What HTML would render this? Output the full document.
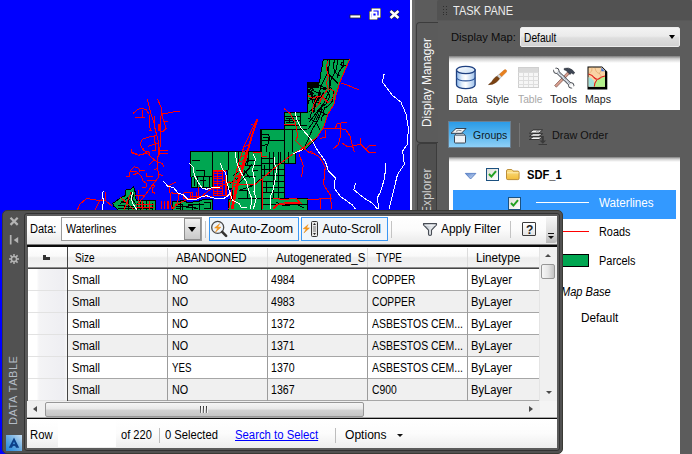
<!DOCTYPE html>
<html><head><meta charset="utf-8"><title>Map Data Table</title>
<style>
html,body{margin:0;padding:0}
body{width:692px;height:454px;overflow:hidden;position:relative;background:#0000ff;font:11px/14px "Liberation Sans",sans-serif}
div,span,svg{position:absolute;box-sizing:border-box}
.t{white-space:pre;transform-origin:0 50%}
#map{left:0;top:0;width:410px;height:454px}
#strip{left:410px;top:0;width:2px;height:454px;background:#fff}
#rp{left:412px;top:0;width:280px;height:454px;background:#5c5c5c;border-left:3px solid #686868}
.vtab{border:1px solid #3c3c3c;border-right:none;border-radius:4px 0 0 4px}
.vt{white-space:pre;transform:rotate(-90deg);transform-origin:0 0}
.combo{background:linear-gradient(#f3f3f3,#ebebeb 45%,#dedede 55%,#d2d2d2);border:1px solid #ececec;border-radius:2px}
.wbox{background:#fff}
.wbox:before{content:"";position:absolute;left:0;right:0;top:0;height:7px;background:linear-gradient(#7c7c7c,#cfcfcf 40%,#fff)}

.wbox.tr:before{height:5px}

</style></head>
<body>
<svg id="map" viewBox="0 0 410 454" shape-rendering="crispEdges"><path d="M172.6 212.0 L172.6 201.5 L183.0 200.8 L188.0 202.5 L198.0 201.6 L204.5 199.0 L212.5 199.0 L212.5 212.0z" fill="#00a651" stroke="#000" stroke-width="1"/>
<path d="M323.4 59.3 L349.7 59.3 L340.5 80.6 L335.8 95.6 L334.1 104.1 L327.6 114.8 L323.4 127.6 L317.0 137.3 L306.3 149.0 L297.0 152.0 L295.2 152.0 L295.2 163.9 L284.8 163.9 L284.8 198.6 L307.5 198.6 L307.5 212.0 L228.6 212.0 L228.6 199.5 L232.0 199.5 L232.0 188.0 L227.0 188.0 L227.0 170.0 L212.5 170.0 L212.5 187.3 L191.6 187.3 L191.6 184.5 L190.8 174.7 L190.8 151.8 L260.5 151.8 L260.5 129.4 L284.5 129.4 L284.5 112.3 L307.4 112.3 L307.4 82.1 L319.5 82.1 L321.0 72.0z" fill="#00a651" stroke="#000" stroke-width="1"/>
<path d="M112.8 203.4 L121.0 197.5 L125.8 195.5 L125.8 190.0 L131.0 189.0 L133.6 187.0 L135.5 193.0 L136.2 200.8 L155.3 200.8 L155.3 212.0 L120.0 212.0 L116.0 208.0 L113.5 206.0z" fill="#00a651" stroke="#000" stroke-width="1"/>
<path d="M307.4 82.1 h12 v6 h-12z" fill="#000"/>
<path d="M261.2 129.4 L261.2 210.0 M273.5 152.0 L273.5 198.6 M278.6 152.0 L278.6 198.6 M269.2 152.0 L269.2 175.0 M284.8 129.4 L284.8 164.0 M212.5 151.8 L212.5 187.7 M238.0 151.8 L238.0 165.0 M203.0 176.0 L203.0 187.7 M197.0 176.0 L197.0 187.7 M209.0 176.0 L209.0 187.7 M248.0 152.0 L248.0 162.0 M292.0 130.0 L292.0 152.0 M300.0 112.3 L300.0 129.4 M228.0 152.0 L228.0 170.0 M261.2 163.9 L295.2 163.9 M261.2 169.7 L284.8 169.7 M261.2 175.5 L284.8 175.5 M261.2 181.2 L284.8 181.2 M261.2 187.0 L284.8 187.0 M261.2 192.8 L284.8 192.8 M238.0 198.6 L307.5 198.6 M192.0 176.0 L212.5 176.0 M238.0 165.0 L261.0 165.0 M260.5 129.4 L307.0 129.4 M261.0 140.0 L284.8 140.0 M284.5 120.0 L300.0 120.0 M262.0 204.0 L307.0 204.0 M262.0 158.0 L273.0 158.0 M330.0 59.3 L328.0 72.0 L322.0 84.0 L318.0 96.0 L314.0 108.0 L309.0 112.0 M338.0 59.3 L336.0 70.0 L331.0 80.0 L329.0 92.0 L324.0 103.0 L318.0 112.0 L312.0 124.0 L308.0 129.0 M344.0 59.3 L343.0 66.0 L339.0 72.0 L337.0 78.0 M320.0 88.0 L326.0 90.0 L330.0 96.0 L326.0 104.0 L320.0 108.0 L314.0 116.0 L309.0 122.0 M309.0 90.0 L313.0 94.0 L312.0 102.0 L316.0 106.0 L313.0 112.0 M309.0 98.0 L315.0 100.0 L320.0 98.0 L324.0 92.0 M322.0 110.0 L318.0 120.0 L312.0 130.0 L308.0 140.0 L304.0 148.0 M308.0 118.0 L316.0 122.0 L320.0 130.0 M328.2 58.9 L326.5 65.6 L329.1 74.4 L334.4 79.7 L337.9 83.2 M334.4 58.9 L333.5 67.3 L335.3 72.6 L339.7 76.2 M342.3 62.0 L340.9 64.7 L343.2 66.5 L346.2 64.7 M329.1 74.4 L330.0 86.7 L333.5 92.0 L332.6 100.9 L328.2 106.1 L324.7 107.9 L322.9 113.2 M286.0 118.0 L293.0 118.0 L293.0 122.0 L286.0 122.0 M289.0 118.0 L289.0 122.0 M284.5 116.0 L300.0 116.0 M284.5 125.0 L307.0 125.0 M263.0 137.0 L268.0 137.0 L269.0 142.0 L266.0 148.0 L266.0 152.0 M236.0 180.0 L240.0 176.0 L246.0 172.0 L250.0 168.0 M240.0 190.0 L252.0 186.0 L262.0 178.0 M180.0 200.7 L180.0 210.0 M188.0 204.0 L204.0 204.0 M176.0 206.0 L196.0 208.0 M120.0 204.0 L130.0 196.0 L136.0 204.0 L150.0 204.0 M128.0 200.0 L128.0 210.0 M140.0 201.0 L140.0 210.0 M146.0 201.0 L146.0 210.0 M118.0 208.0 L152.0 208.0 M240.0 172.0 L248.0 160.0 L256.0 160.0 M243.0 176.0 L252.0 164.0 M238.0 184.0 L246.0 176.0 L256.0 176.0 M244.0 170.0 L250.0 178.0 M247.0 158.0 L247.0 166.0 M252.0 170.0 L258.0 170.0 M239.0 190.0 L247.0 190.0 L247.0 198.0 M250.0 186.0 L258.0 182.0 M233.0 176.0 L238.0 172.0 M230.0 184.0 L236.0 178.0 M228.0 190.0 L233.0 188.0 M262.0 134.0 L268.0 134.0 L270.0 138.0 L268.0 144.0 L262.0 146.0 M262.0 158.0 L270.0 158.0 M264.0 165.0 L264.0 175.0 M266.0 181.0 L266.0 192.0 M280.0 152.0 L280.0 164.0 M288.0 152.0 L288.0 164.0 M118.0 205.0 L124.0 205.0 L124.0 210.0 M121.0 201.0 L126.0 203.0 L130.0 199.0 M131.0 192.0 L134.0 196.0 L131.0 200.0 M137.0 203.0 L137.0 210.0 M143.0 203.0 L143.0 207.0 M152.0 203.0 L152.0 210.0 M126.0 206.0 L134.0 207.0 M175.0 204.0 L182.0 204.0 L182.0 210.0 M185.0 207.0 L192.0 205.0 L192.0 210.0 M199.0 203.0 L199.0 210.0 M204.0 202.0 L210.0 202.0 L210.0 208.0 L204.0 208.0 M194.0 208.0 L198.0 208.0 M176.0 208.0 L180.0 208.0 M194.0 178.0 L194.0 186.0 M200.0 180.0 L206.0 180.0 M196.0 170.0 L204.0 170.0 L204.0 176.0 M192.0 160.0 L200.0 160.0 M276.0 202.0 L284.0 206.0 L296.0 204.0 L304.0 208.0" fill="none" stroke="#000" stroke-width="1"/>
<clipPath id="mc"><path d="M323.4 59.3 L349.7 59.3 L340.5 80.6 L335.8 95.6 L334.1 104.1 L327.6 114.8 L323.4 127.6 L317.0 137.3 L306.3 149.0 L297.0 152.0 L295.2 152.0 L295.2 163.9 L284.8 163.9 L284.8 198.6 L307.5 198.6 L307.5 212.0 L228.6 212.0 L228.6 199.5 L232.0 199.5 L232.0 188.0 L227.0 188.0 L227.0 170.0 L212.5 170.0 L212.5 187.3 L191.6 187.3 L191.6 184.5 L190.8 174.7 L190.8 151.8 L260.5 151.8 L260.5 129.4 L284.5 129.4 L284.5 112.3 L307.4 112.3 L307.4 82.1 L319.5 82.1 L321.0 72.0z"/></clipPath>
<path clip-path="url(#mc)" d="M313.2 88.5 L311.9 90.9 L310.3 94.2 M308.1 99.2 L306.1 99.4 L306.7 102.1 M315.1 108.8 L314.6 111.8 L313.4 112.1 M318.0 95.9 L317.3 98.8 L314.4 103.0 M309.7 87.5 L310.8 88.6 L313.8 89.1 M319.1 95.2 L316.5 96.9 L316.6 100.3 M319.9 96.8 L318.8 98.3 L317.9 100.9 M322.1 105.0 L321.2 108.0 L320.2 108.8 M320.9 92.6 L318.8 97.0 L317.3 99.7 M309.9 98.7 L312.1 99.4 L312.8 99.8 M323.6 93.4 L322.4 96.2 L320.7 99.2 M323.0 112.3 L324.1 113.9 L327.8 114.2 M319.3 113.8 L317.4 117.5 L316.1 120.2 M307.4 97.9 L305.2 100.4 L305.7 101.3 M309.5 91.4 L310.4 92.1 L313.9 93.2 M317.4 110.5 L320.0 111.5 L323.8 113.0 M313.8 110.5 L311.1 113.2 L310.3 117.5 M311.4 98.5 L308.6 101.0 L308.8 103.9 M314.0 101.0 L317.6 102.7 L321.0 103.7 M319.8 85.6 L324.3 87.8 L326.6 88.2 M314.5 96.0 L314.7 95.3 L317.6 97.2 M311.0 88.9 L308.4 89.9 L308.9 93.1 M308.9 94.9 L310.7 94.4 L311.7 96.0 M311.8 94.4 L311.8 98.1 L309.6 98.8 M315.9 98.5 L314.6 99.4 L314.3 101.6 M322.7 88.8 L324.2 88.3 L325.6 89.9 M317.3 84.8 L320.9 86.4 L322.4 86.8 M312.0 95.0 L313.8 96.5 L315.4 96.3 M313.3 90.7 L317.5 92.8 L319.6 93.2 M322.5 106.2 L321.2 106.6 L320.7 109.9 M307.5 92.4 L310.8 93.0 L311.4 93.9 M324.8 113.6 L322.2 116.3 L321.3 120.6 M310.7 90.1 L314.5 91.1 L316.2 92.3 M319.4 108.0 L322.2 109.4 L322.5 109.2" fill="none" stroke="#000" stroke-width="1"/>
<path d="M147.5 99.4 L148.9 105.9 L151.0 113.8 L154.0 123.2 L155.4 130.5 L157.6 137.7 L158.7 144.9 L159.0 155.0 L157.9 156.7 L157.3 162.5 L157.9 169.7 L158.7 176.9 L153.2 184.1 L148.9 189.9 L143.1 197.9 L138.8 202.9 M157.6 99.4 L161.9 108.8 L161.9 113.8 L160.5 117.5 L160.5 131.9 L160.2 144.9 L159.3 155.0 M161.9 113.8 L167.7 113.1 L173.5 112.0 L179.5 111.4 M133.3 113.4 L137.3 109.5 L141.7 108.4 L146.0 109.5 L148.9 113.8 M142.4 110.2 L142.4 117.2 M135.2 117.2 L144.6 117.2 M149.6 115.3 L149.6 124.0 L150.3 130.5 M149.0 130.5 L151.5 130.5 M154.0 116.0 L154.0 124.0 M161.9 113.8 L163.4 120.3 L166.2 128.3 L163.4 131.2 L160.2 131.9 M163.4 121.4 L167.7 121.4 M158.3 124.0 L159.0 131.0 M159.0 124.0 L159.6 131.0 M156.1 135.5 L148.9 137.0 L142.4 139.1 L140.2 143.5 L141.7 147.8 L143.8 150.7 L148.9 152.1 L149.6 155.0 M148.2 146.4 L154.7 144.2 L159.0 142.7 M154.7 136.2 L155.4 150.0 L151.8 150.0 M159.7 150.3 L167.7 150.3 M159.7 153.2 L167.7 153.2 M131.3 149.2 L131.6 152.1 L137.3 154.3 M143.1 154.3 L147.5 151.4 M130.8 149.4 L132.3 153.0 L138.8 155.2 L146.7 153.0 L143.1 148.7 M146.7 153.0 L154.0 159.6 L149.6 164.6 M154.0 159.6 L157.6 162.5 L162.6 163.2 L163.4 167.5 M125.8 176.2 L129.4 176.2 L130.1 171.1 L134.5 166.8 L138.8 168.2 L139.5 171.1 L145.3 170.4 M130.1 171.1 L135.9 171.1 L138.0 173.3 L133.0 174.7 M138.0 173.3 L141.7 176.9 L143.1 181.2 L146.7 183.4 L146.0 187.0 L141.7 187.0 M146.7 172.6 L146.7 176.9 L152.5 176.9 M146.7 180.5 L156.1 180.5 M154.0 169.7 L158.3 168.2 M157.9 174.0 L162.6 175.5 M151.3 186.3 L153.0 184.6 L154.7 186.3 L153.0 188.0 L151.3 186.3 M153.0 188.5 L152.5 192.8 L155.4 193.1 M138.0 190.0 L138.0 194.0 M135.2 195.0 L143.8 195.0 M138.0 196.0 L138.0 201.0 M161.2 200.7 L161.2 209.0 M164.1 200.7 L164.1 209.0 M167.0 200.7 L167.0 209.0 M168.4 200.7 L168.4 209.0 M167.7 186.3 L175.6 182.0 M169.9 187.0 L169.9 191.4 L171.3 209.0 M171.3 192.8 L179.2 194.2 L177.8 201.5 L173.5 209.0 M183.6 192.8 L192.3 192.8 L192.3 198.6 L183.6 198.6 L183.6 192.8 M198.8 187.0 L198.8 197.1 M171.3 209.0 L178.0 204.0 L186.0 200.0 L192.3 198.6 L200.9 197.1 L209.6 189.9 L220.0 186.0 L229.5 182.0 L241.0 184.8 L255.5 184.1 L262.7 178.3 L275.7 166.8 L293.0 153.8 L303.2 148.0 L317.0 137.3 L323.4 127.6 L327.6 114.8 L334.1 104.1 L335.8 95.6 L340.5 80.6 L349.7 59.3 M77.3 210.0 L80.0 204.0 L86.7 198.4 L96.0 200.0 L100.0 200.0 L105.0 201.0 M95.0 210.0 L99.0 202.0 L103.0 198.0 M105.0 192.0 L106.0 201.0 L112.0 206.0 M120.0 197.0 L128.0 204.0 L134.0 210.0 M124.0 210.0 L128.0 200.0 L131.0 192.0 M136.0 204.0 L154.0 204.0 M142.0 201.0 L142.0 210.0 M149.0 201.0 L149.0 210.0 M136.0 207.0 L154.0 207.0 M256.7 119.3 L251.3 136.4 L247.0 151.3 L241.7 170.6 L236.4 187.6 L232.1 209.0 M257.7 119.3 L252.3 136.4 L248.0 151.3 L242.7 170.6 L237.4 187.6 L233.1 209.0 M246.1 151.3 L240.8 170.6 L235.5 187.6 L231.2 209.0 M255.6 121.4 L243.8 147.0 L238.5 164.1 L233.2 183.4 L228.9 209.0 M244.3 147.0 L248.5 145.0 M242.6 152.0 L247.1 150.0 M241.0 157.0 L245.7 155.0 M239.5 162.0 L244.3 160.0 M238.0 167.0 L243.0 165.0 M236.6 172.0 L241.6 170.0 M235.2 177.0 L240.0 175.0 M233.9 182.0 L238.5 180.0 M232.8 187.0 L236.9 185.0 M253.0 125.0 L251.0 124.0 M262.0 179.0 L262.0 209.0 M303.2 148.0 L308.9 152.3 L315.0 154.5 M298.8 153.8 L303.2 165.3 L301.7 176.9 M272.8 198.6 L284.4 199.3 L295.9 198.6 L300.3 202.9 L293.0 202.2 L284.4 202.9 L277.1 204.4 L272.8 209.0 M274.0 209.0 L278.0 205.0 L285.0 204.0 L294.0 203.5 L300.0 204.0 M307.5 199.3 L331.9 198.7 M320.1 198.7 L320.1 209.0 M253.3 152.3 L261.2 152.3 L261.2 156.0 L267.0 156.7 M213.5 171.0 L222.0 171.0 M213.5 173.5 L222.0 173.5 M213.5 176.0 L222.0 176.0 M213.5 178.5 L222.0 178.5 M213.5 181.0 L222.0 181.0 M213.5 183.5 L222.0 183.5 M213.5 186.0 L222.0 186.0 M213.5 188.5 L222.0 188.5 M213.5 191.0 L222.0 191.0 M213.5 193.5 L222.0 193.5 M213.5 170.0 L213.5 195.0 M217.5 170.0 L217.5 195.0 M222.0 170.0 L222.0 195.0 M225.5 170.0 L225.5 195.0 M213.5 170.0 L226.0 170.0 M222.0 180.0 L226.0 180.0 L226.0 195.0 L213.0 195.0 M190.8 196.0 L212.0 196.0 M196.0 192.0 L196.0 200.0 M190.8 193.0 L190.8 200.0 M327.3 61.2 L326.5 69.1 L328.2 76.2 L326.5 83.2 L328.2 88.5 L334.4 91.2 L333.5 97.3 L328.2 102.6 L324.7 99.1 L322.9 97.3 L317.6 96.4 L313.2 106.1 L312.3 112.3 M307.9 95.6 L312.3 98.2 L317.6 96.4 M328.2 88.5 L322.9 95.6 L318.5 104.4 L315.0 107.9 M340.5 82.8 L346.9 84.9 L354.4 88.1 L358.8 89.6 M323.4 128.7 L335.1 128.7 L337.3 123.4 L346.9 122.3 M335.1 128.7 L340.5 128.7 L345.8 129.8 L350.1 136.2 L352.2 144.7 L354.4 152.0 M340.5 123.4 L340.5 136.2 L338.3 144.7 L333.0 149.0 M325.5 129.8 L325.5 137.3 L320.2 138.3 M341.5 142.6 L347.9 146.9 L360.5 144.2 L360.5 138.0 M360.5 144.2 L368.9 152.6 L376.3 152.6 M368.9 145.9 L376.3 145.9 M368.9 145.9 L366.0 149.0 M283.8 108.4 L290.3 113.8 L295.6 123.4 L297.7 136.2 L295.6 140.5 L304.1 149.0 M283.8 124.4 L295.6 124.4 M310.0 150.9 L320.1 157.6 L325.2 167.7 L323.5 184.6 L330.2 194.7 L331.9 209.0" fill="none" stroke="#ff0000" stroke-width="1"/>
<path d="M384.1 74.1 L382.4 81.9 L392.5 95.4 L400.9 102.1 L406.0 113.9 L408.3 127.3 L407.6 144.2 L402.6 150.9 L404.3 164.4 L397.5 174.5 L394.2 187.9 L390.8 201.4 L389.1 209.0 M385.8 162.7 L384.7 177.8 L380.7 191.3 L377.3 198.0 L379.0 209.0 M355.5 182.9 L353.8 189.6 L363.9 198.0 L372.3 203.1 L377.3 209.0 M295.2 112.3 L296.7 119.1 L300.9 127.6 L308.4 136.2 L313.0 142.0 L316.7 149.2 L325.2 161.0 L328.5 171.1 L335.3 177.8 L334.2 187.9 L340.3 196.4 L352.1 204.8 L355.5 209.0 M303.2 149.4 L293.0 153.8 M220.1 163.2 L222.9 169.7 L225.8 173.3 L226.6 181.2 L229.5 191.4 L232.3 200.0 L239.6 203.6 L241.0 207.2 L247.5 207.5 M235.2 152.3 L236.7 162.5 L239.6 169.7 L242.5 175.5 L246.1 181.2 L249.0 191.4 L251.9 198.6 L250.4 209.0 M253.3 153.8 L255.5 159.6 L252.6 169.7 L254.7 181.2 L254.0 191.4 L256.2 198.6 L253.3 209.0 M274.2 156.7 L274.2 162.5 L276.4 168.2 L275.7 176.9 L274.2 184.1 L272.8 191.4 L270.6 195.7 L270.6 209.0 M163.4 181.2 L167.7 186.3 L173.5 187.7 L177.8 192.8 L183.6 195.0 L187.9 199.3 L195.1 200.0 L200.9 197.1 L206.7 195.7 L212.5 197.9 L223.7 198.6 L228.0 195.7 L230.9 192.8 M189.4 163.2 L193.0 166.8 L194.4 175.5 L198.0 182.0 L202.4 188.5 L206.7 189.2 L212.5 187.7 L220.0 187.3 M103.4 191.0 L102.0 196.0 L104.0 201.0 L102.5 205.0 L103.0 210.0 M133.0 192.0 L131.0 198.0 L133.0 204.0 L137.0 210.0" fill="none" stroke="#fff" stroke-width="1"/>
<g shape-rendering="auto"><rect x="350" y="15" width="10.500" height="3" fill="#fff" stroke="#223" stroke-width=".8"/><path d="M372.500 9.500 h7 v7 h-7z M370.500 12.500 h6 v6 h-6z" fill="#0000ff" stroke="#223" stroke-width="3"/><path d="M372.500 9.500 h7 v7 h-7z M370.500 12.500 h6 v6 h-6z" fill="#0000ff" stroke="#fff" stroke-width="1.800"/><path d="M390.500 11 l8 7 M398.500 11 l-8 7" stroke="#223" stroke-width="3.800"/><path d="M390.500 11 l8 7 M398.500 11 l-8 7" stroke="#fff" stroke-width="2.600"/></g></svg>
<div id="strip"></div>
<div id="rp"></div>
<div style="left:437px;top:0;width:255px;height:20px;background:#525252;border-radius:2px 3px 0 0"></div><div style="left:437px;top:20px;width:255px;height:1px;background:#585858"></div>
<div style="left:443px;top:6px;width:1px;height:1px;background:#2e2e2e"></div><div style="left:443px;top:9px;width:1px;height:1px;background:#2e2e2e"></div><div style="left:443px;top:12px;width:1px;height:1px;background:#2e2e2e"></div><div style="left:443px;top:14px;width:1px;height:1px;background:#2e2e2e"></div><div style="left:446px;top:6px;width:1px;height:1px;background:#2e2e2e"></div><div style="left:446px;top:9px;width:1px;height:1px;background:#2e2e2e"></div><div style="left:446px;top:12px;width:1px;height:1px;background:#2e2e2e"></div><div style="left:446px;top:14px;width:1px;height:1px;background:#2e2e2e"></div>
<span class="t" style="left:452.5px;top:3.7px;font:normal normal 12px/14px 'Liberation Sans',sans-serif;color:#ececec;transform:scaleX(0.916);">TASK PANE</span>
<div class="vtab" style="left:416px;top:22px;width:22px;height:121px;background:#5b5b5b"></div>
<div class="vtab" style="left:417px;top:143px;width:20px;height:120px;background:#505050"></div>
<div style="left:436px;top:143px;width:1px;height:120px;background:#3c3c3c"></div>
<span class="vt" style="left:419.500px;top:127px;font:12px/14px 'Liberation Sans',sans-serif;color:#f6f6f6;letter-spacing:-0.08px">Display Manager</span>
<span class="vt" style="left:419.500px;top:213.500px;font:12px/14px 'Liberation Sans',sans-serif;color:#cfcfcf;letter-spacing:0.1px">Explorer</span>
<span class="t" style="left:450.6px;top:29.8px;font:normal normal 11px/14px 'Liberation Sans',sans-serif;color:#0c0c0c;transform:scaleX(1.022);">Display Map:</span>
<div class="combo" style="left:520px;top:27px;width:160px;height:19.500px"></div>
<span class="t" style="left:523.6px;top:30.6px;font:normal normal 12px/14px 'Liberation Sans',sans-serif;color:#000;transform:scaleX(0.852);">Default</span>
<div style="left:669px;top:35px;width:0;height:0;border:3.500px solid transparent;border-top:4px solid #000;border-bottom:none"></div>
<div class="wbox" style="left:449px;top:56px;width:231px;height:54px"></div>
<span class="t" style="left:455.6px;top:91.7px;font:normal normal 11px/14px 'Liberation Sans',sans-serif;color:#1c1c1c;transform:scaleX(0.920);">Data</span>
<span class="t" style="left:486.0px;top:91.7px;font:normal normal 11px/14px 'Liberation Sans',sans-serif;color:#1c1c1c;transform:scaleX(0.940);">Style</span>
<span class="t" style="left:517.5px;top:91.7px;font:normal normal 11px/14px 'Liberation Sans',sans-serif;color:#a8a8a8;transform:scaleX(0.932);">Table</span>
<span class="t" style="left:550.0px;top:91.7px;font:normal normal 11px/14px 'Liberation Sans',sans-serif;color:#1c1c1c;transform:scaleX(1.051);">Tools</span>
<span class="t" style="left:585.0px;top:91.7px;font:normal normal 11px/14px 'Liberation Sans',sans-serif;color:#1c1c1c;transform:scaleX(0.966);">Maps</span>
<svg style="left:0;top:0;width:692px;height:454px" viewBox="0 0 692 454" >
<defs>
<linearGradient id="cyl" x1="0" x2="1" y1="0" y2="0"><stop offset="0" stop-color="#8ab6ea"/><stop offset=".3" stop-color="#e4effb"/><stop offset=".5" stop-color="#ffffff"/><stop offset="1" stop-color="#9cc0ea"/></linearGradient>
<linearGradient id="cylt" x1="0" x2="1" y1="0" y2="1"><stop offset="0" stop-color="#ffffff"/><stop offset="1" stop-color="#c4dbf3"/></linearGradient>
</defs>
<!-- Data cylinder -->
<path d="M456.5 70 v15 a9.3 3.6 0 0 0 18.6 0 v-15 z" fill="url(#cyl)" stroke="#1d3f80" stroke-width="1.3"/>
<path d="M456.5 77.5 a9.3 3.4 0 0 0 18.6 0" fill="none" stroke="#2a5298" stroke-width="1.1"/>
<ellipse cx="465.8" cy="70" rx="9.3" ry="3.6" fill="url(#cylt)" stroke="#1d3f80" stroke-width="1.3"/>
<!-- Style brush -->
<path d="M488.5 84.6 q4 .4 7.5 -2.2 q3 -2.2 3.8 -4.2 l-2.4 -2.2 q-2.6 1 -4.2 3.6 q-1.6 3.4 -4.7 5z" fill="#7c4312" stroke="#5e300a" stroke-width=".5"/>
<path d="M497.2 76 l2.6 2.5 l2 -1.9 l-2.5 -2.5z" fill="#d8d8d8" stroke="#8a8a8a" stroke-width=".4"/>
<path d="M499.4 74.2 l2.4 2.4 l4.6 -4.6 q.7 -1.2 -.2 -2 q-1 -.8 -2.1 0z" fill="#e8801e" stroke="#b85c0c" stroke-width=".4"/>
<!-- Table (disabled) -->
<rect x="518.5" y="67.5" width="20" height="20" fill="#f6f6f6" stroke="#cfcfcf"/>
<rect x="519" y="68" width="19" height="4" fill="#dadada"/>
<path d="M518.5 72.5h20 M518.5 76.5h20 M518.5 80.5h20 M518.5 84.5h20 M523.5 72v15 M528.5 72v15 M533.5 72v15" stroke="#dedede" stroke-width="1" fill="none"/>
<!-- Tools: hammer -->
<path d="M554.6 85.6 l1.8 1.6 l13.6 -14 l-1.9 -1.7z" fill="#d9a090" stroke="#6a4038" stroke-width=".6"/>
<path d="M564.2 68.4 q4.6 -1.4 8 1.4 l2.6 3 l-1.6 1.5 l-1.6 -1.4 l-1.6 1.7 l-3 -3.2 q-.9 -1.6 -2.8 -1.5z" fill="#3e4654" stroke="#20242c" stroke-width=".5"/>
<!-- Tools: wrench -->
<path d="M557.2 71.7 L570.3 84.500" stroke="#30343c" stroke-width="3.600" fill="none"/>
<circle cx="556.300" cy="70.800" r="2.700" fill="#f6f6f6" stroke="#30343c" stroke-width=".9"/>
<circle cx="571.200" cy="85.400" r="2.700" fill="#f6f6f6" stroke="#30343c" stroke-width=".9"/>
<path d="M557.2 71.7 L570.3 84.500" stroke="#f2f4f6" stroke-width="2" fill="none"/>
<path d="M557.600 72.100 L569.900 84.100" stroke="#9aa6b8" stroke-width="1.600" stroke-dasharray=".8 1" fill="none"/>
<path d="M553.200 67.700 l3 3 M574.300 88.500 l-3 -3" stroke="#fff" stroke-width="2.200"/>
<!-- Maps page -->
<path d="M587.5 66.5 h14.500 l5.300 5.300 v17.700 h-19.800z" fill="#000"/>
<path d="M588.500 67.500 h12.800 l3.700 3.700 v15.500 h-16.500z" fill="#f9d3a4"/>
<path d="M588.500 77 q3 1 5 3.500 q1 2.500 .5 6.200 h-5.500z" fill="#9fe0dc"/>
<path d="M594 86.700 q.5 -4.500 2.500 -6.700 q3 -2.500 8.500 -3.500 v10.200z" fill="#b4f08c"/>
<path d="M588.500 74 q4 1 5.500 3.500 q2.500 2.500 4.500 1.500 q3 -2.500 6.500 -3 M596.800 80 q-2.300 2.500 -2.500 6.500" fill="none" stroke="#e01818" stroke-width="1.100"/>
<path d="M592 67.500 q1 4 -3 6 M595 68 q1 5 4.500 5.500 q2 2 1.500 5 M601 70 q-.5 3 -2 3.500" fill="none" stroke="#d8a060" stroke-width=".6"/>
<path d="M601.300 67.500 v3.700 h3.700z" fill="#3c6cd0"/>
<path d="M601.300 67.500 l3.700 3.700" stroke="#fff" stroke-width=".7"/>
</svg>
<div style="left:448px;top:121px;width:63px;height:27px;background:linear-gradient(#2c9be6,#55b4ee 50%,#8fd0f6);border:1px solid #6b7f90"></div>
<span class="t" style="left:473.0px;top:128.3px;font:normal normal 11px/14px 'Liberation Sans',sans-serif;color:#0e1a26;transform:scaleX(0.951);">Groups</span>
<div style="left:519px;top:123px;width:1px;height:24px;background:#747474"></div>
<span class="t" style="left:552.0px;top:128.3px;font:normal normal 11px/14px 'Liberation Sans',sans-serif;color:#111;transform:scaleX(0.985);">Draw Order</span>
<div class="wbox tr" style="left:449px;top:157px;width:231px;height:297px"></div>
<div style="left:453px;top:190px;width:223px;height:29px;background:#3399ff"></div>
<span class="t" style="left:527.2px;top:168.2px;font:normal bold 12px/14px 'Liberation Sans',sans-serif;color:#000;transform:scaleX(0.931);">SDF_1</span>
<span class="t" style="left:598.5px;top:196.2px;font:normal normal 12px/14px 'Liberation Sans',sans-serif;color:#fff;transform:scaleX(0.972);">Waterlines</span>
<span class="t" style="left:598.5px;top:224.7px;font:normal normal 12px/14px 'Liberation Sans',sans-serif;color:#000;transform:scaleX(0.905);">Roads</span>
<span class="t" style="left:598.5px;top:253.9px;font:normal normal 12px/14px 'Liberation Sans',sans-serif;color:#000;transform:scaleX(0.912);">Parcels</span>
<span class="t" style="left:561.0px;top:284.9px;font:italic normal 12px/14px 'Liberation Sans',sans-serif;color:#000;transform:scaleX(0.920);">Map Base</span>
<span class="t" style="left:581.3px;top:310.6px;font:normal normal 12px/14px 'Liberation Sans',sans-serif;color:#000;transform:scaleX(0.981);">Default</span>
<div style="left:536px;top:202px;width:53px;height:1px;background:#fff"></div>
<div style="left:536px;top:231px;width:53px;height:1px;background:#ff0000"></div>
<div style="left:536px;top:254px;width:53px;height:13px;background:#00a651;border:1px solid #000"></div>
<svg style="left:0;top:0;width:692px;height:454px" viewBox="0 0 692 454" >
<defs>
<linearGradient id="tri" x1="0" x2="1" y1="0" y2="1"><stop offset="0" stop-color="#5d86cc"/><stop offset="1" stop-color="#d5e2f6"/></linearGradient>
<linearGradient id="fold" x1="0" x2="0" y1="0" y2="1"><stop offset="0" stop-color="#fbe08a"/><stop offset="1" stop-color="#f2bd38"/></linearGradient>
<linearGradient id="cb" x1="0" x2="1" y1="0" y2="1"><stop offset="0" stop-color="#dcdcd6"/><stop offset="1" stop-color="#ffffff"/></linearGradient>
</defs>
<!-- Groups icon -->
<path d="M451 133.300 l5 -4.800 h10 l-4.600 4.800z" fill="#f4f6f8" stroke="#2a3340" stroke-width=".9"/>
<path d="M456 131.300 q2.500 -1.600 5.500 -.600" fill="none" stroke="#555" stroke-width=".7"/>
<rect x="454.500" y="135.500" width="11" height="7.500" rx=".8" fill="#eef2f6" stroke="#2a3340" stroke-width=".9"/>
<path d="M454.500 135.500 l1.500 -1.700 h7.500 l2 1.700" fill="#cfd6de" stroke="#2a3340" stroke-width=".8"/>
<!-- Draw order icon -->
<g stroke="#1c1c1c" stroke-width=".8" fill="#f2f2f2">
<path d="M529.500 139.500 l3.500 -2.600 h9.500 l-3.500 2.600z"/>
<path d="M529.500 136.300 l3.500 -2.600 h9.500 l-3.500 2.600z"/>
<path d="M529.500 133 l3.500 -3 h9.500 l-3.500 3z"/>
</g>
<path d="M536.200 131.500 q1.500 -1 3 -.3" fill="none" stroke="#444" stroke-width=".6"/>
<path d="M541.800 136 v4.500 h-2.300 l3.300 3.200 l3.300 -3.200 h-2.300 v-4.500z" fill="#3a3a3a"/>
<path d="M538.500 144.500 h8.500" stroke="#3a3a3a" stroke-width="1"/>
<!-- expand triangle -->
<path d="M465.300 173.400 h10.600 l-5.300 5.600z" fill="url(#tri)" stroke="#4a74be" stroke-width=".8"/>
<!-- checkbox 1 -->
<rect x="486.500" y="168.500" width="12" height="12" fill="url(#cb)" stroke="#1c5180"/>
<path d="M489 174 l2.400 2.600 l4.600 -5.400" fill="none" stroke="#21a121" stroke-width="2"/>
<!-- folder -->
<path d="M506.500 171 q0 -1.500 1.500 -1.500 h3.200 q1 0 1.500 1 l.3 .6 h4.800 q1.300 0 1.300 1.300 v6 q0 1.200 -1.300 1.200 h-10 q-1.300 0 -1.300 -1.200z" fill="url(#fold)" stroke="#b5852a" stroke-width=".9"/>
<path d="M507 172.800 h11.600" stroke="#fff3c4" stroke-width=".8"/>
<!-- checkbox 2 -->
<rect x="508.500" y="197.500" width="12" height="12" fill="url(#cb)" stroke="#1c5180"/>
<path d="M511 203 l2.400 2.600 l4.600 -5.400" fill="none" stroke="#21a121" stroke-width="2"/>
</svg>
<div style="left:2px;top:210px;width:561px;height:244px;background:#515151;border:1px solid #3a3a34;border-radius:5px"></div>
<div style="left:24px;top:213px;width:536px;height:238px;background:#5b5b5b;border:1px solid #323232;border-radius:3px"></div>
<div style="left:27px;top:216px;width:530px;height:232px;background:#fff"></div>
<svg style="left:0;top:0;width:692px;height:454px" viewBox="0 0 692 454" >
<g stroke="#b4b4b4" fill="none">
<path d="M10.500 217.700 l7.200 7.200 M17.700 217.700 l-7.200 7.200" stroke-width="2.200"/>
<path d="M10.700 235 v9.500" stroke-width="1.700"/>
</g>
<path d="M18.200 237 v6.200 l-4.500 -3.100z" fill="#b4b4b4"/>
<g stroke="#b4b4b4" stroke-width="1.500" fill="none">
<circle cx="14" cy="259" r="2.600"/>
<path d="M14 254 v2 M14 262 v2 M9 259 h2 M17 259 h2 M10.400 255.400 l1.500 1.500 M16.100 261.100 l1.500 1.500 M17.600 255.400 l-1.500 1.500 M11.900 261.100 l-1.500 1.500"/>
</g>
<defs><linearGradient id="alogo" x1="0" x2="1" y1="1" y2="0"><stop offset="0" stop-color="#1f86de"/><stop offset=".45" stop-color="#5fa6e0"/><stop offset="1" stop-color="#c6ddf2"/></linearGradient></defs>
<rect x="6" y="435" width="16" height="16" fill="url(#alogo)"/>
<path d="M14 437.500 l5.200 10.300 h-3.200 l-.7 -1.600 q-1.300 -1 -2.600 0 l-.7 1.600 h-3.200z" fill="#0c3f88"/>
<path d="M14 441.500 l1.300 2.800 q-1.300 -.5 -2.600 0z" fill="#3f8fd8"/>
</svg>
<span class="vt" style="left:5.500px;top:425px;font:11px/14px 'Liberation Sans',sans-serif;color:#b4bcc6;letter-spacing:0.55px">DATA TABLE</span>
<div style="left:27px;top:216px;width:530px;height:28px;background:linear-gradient(#fff,#fbfbfb 50%,#e9e9e9)"></div>
<div style="left:27px;top:244px;width:530px;height:1px;background:#7c7c7c"></div><div style="left:27px;top:245px;width:530px;height:2px;background:#0a0a0a"></div>
<span class="t" style="left:30.2px;top:221.5px;font:normal normal 12px/14px 'Liberation Sans',sans-serif;color:#000;transform:scaleX(0.920);">Data:</span>
<div style="left:61px;top:217px;width:141px;height:24px;background:#fff;border:1px solid #9a9a9a"></div>
<span class="t" style="left:65.7px;top:221.5px;font:normal normal 12px/14px 'Liberation Sans',sans-serif;color:#000;transform:scaleX(0.894);">Waterlines</span>
<div style="left:184px;top:218px;width:17px;height:22px;background:linear-gradient(#f2f2f2,#dcdcdc 50%,#cacaca);border:1px solid #8e8e8e"></div>
<div style="left:188px;top:227px;width:0;height:0;border:4px solid transparent;border-top:5px solid #000;border-bottom:none"></div>
<div style="left:205px;top:221px;width:1px;height:17px;background:#c4c4c4"></div>
<div style="left:209px;top:217px;width:90px;height:24px;background:#f1f6fb;border:1px solid #3b97f3"></div>
<span class="t" style="left:229.8px;top:221.5px;font:normal normal 12px/14px 'Liberation Sans',sans-serif;color:#000;transform:scaleX(1.065);">Auto-Zoom</span>
<div style="left:301px;top:217px;width:87px;height:24px;background:#f1f6fb;border:1px solid #3b97f3"></div>
<span class="t" style="left:322.3px;top:221.5px;font:normal normal 12px/14px 'Liberation Sans',sans-serif;color:#000;">Auto-Scroll</span>
<div style="left:391px;top:221px;width:1px;height:17px;background:#c4c4c4"></div>
<span class="t" style="left:441.3px;top:221.5px;font:normal normal 12px/14px 'Liberation Sans',sans-serif;color:#000;transform:scaleX(0.993);">Apply Filter</span>
<div style="left:510px;top:221px;width:1px;height:17px;background:#c4c4c4"></div>
<svg style="left:0;top:0;width:692px;height:454px" viewBox="0 0 692 454" >
<!-- auto zoom magnifier -->
<circle cx="217.700" cy="227.400" r="6" fill="#eef4fa" stroke="#4a4a4a" stroke-width="1.300"/>
<path d="M222.200 231.900 l3.900 3.900" stroke="#333" stroke-width="2.600" stroke-linecap="round"/>
<path d="M219.800 223.600 l-5.300 4.300 l3.200 .3 l-2.400 4.100 l5.700 -5.100 l-3.200 -.3z" fill="#f79a1c" stroke="#e07c08" stroke-width=".4"/>
<!-- auto scroll -->
<path d="M308.200 224.600 l-5 4.100 l3 .3 l-2.300 4 l5.600 -5 l-3 -.3z" fill="#f79a1c" stroke="#e07c08" stroke-width=".4"/>
<rect x="311.500" y="221.500" width="6" height="15" rx="1" fill="#e8e8e8" stroke="#333" stroke-width="1"/>
<rect x="313" y="226" width="3" height="6" fill="#b0b0b0"/>
<path d="M313 225 l1.500 -2 l1.500 2z M313 233 l1.500 2 l1.500 -2z" fill="#222"/>
<!-- funnel -->
<defs><linearGradient id="fun" x1="0" x2="1" y1="0" y2="0"><stop offset="0" stop-color="#aab2bc"/><stop offset=".6" stop-color="#e6e9ec"/><stop offset="1" stop-color="#c4cad2"/></linearGradient></defs>
<path d="M423.500 223.600 h13 v1.300 l-5 5.200 v4.200 q0 1.100 -1.500 1.100 q-1.500 0 -1.500 -1.100 v-4.200 l-5 -5.200z" fill="url(#fun)" stroke="#474c54" stroke-width="1.100" stroke-linejoin="round"/>
<path d="M424.500 225.200 h11" stroke="#f4f6f8" stroke-width=".9"/>
</svg>
<div style="left:522px;top:222px;width:14px;height:14px;background:linear-gradient(#fff,#e4e4e4);border:1px solid #3a3a3a;border-radius:1px"></div>
<span class="t" style="left:526.0px;top:222.5px;font:normal bold 12px/14px 'Liberation Sans',sans-serif;color:#222;">?</span>
<div style="left:546px;top:217px;width:11px;height:26px;background:linear-gradient(#f4f4f4,#dedede 60%,#b8b8b8);border-radius:0 0 3px 0"></div>
<div style="left:548px;top:233px;width:6px;height:1px;background:#111"></div>
<div style="left:548px;top:236px;width:0;height:0;border:3px solid transparent;border-top:3px solid #111;border-bottom:none"></div>
<div style="left:27px;top:247px;width:513px;height:20px;background:linear-gradient(#fff,#fafafa 45%,#ededed 55%,#f3f3f3)"></div>
<div style="left:27px;top:267px;width:513px;height:1px;background:#8c8c8c"></div><div style="left:27px;top:268px;width:513px;height:1px;background:#454545"></div>
<div style="left:167px;top:248px;width:1px;height:19px;background:#dcdcdc"></div>
<div style="left:267px;top:248px;width:1px;height:19px;background:#dcdcdc"></div>
<div style="left:367px;top:248px;width:1px;height:19px;background:#dcdcdc"></div>
<div style="left:467px;top:248px;width:1px;height:19px;background:#dcdcdc"></div>
<div style="left:67px;top:247px;width:1px;height:154px;background:#444"></div>
<div style="left:43px;top:257px;width:7px;height:3px;background:#333"></div><div style="left:43px;top:255px;width:3px;height:2px;background:#333"></div>
<span class="t" style="left:75.3px;top:250.5px;font:normal normal 12px/14px 'Liberation Sans',sans-serif;color:#000;transform:scaleX(0.840);">Size</span>
<span class="t" style="left:175.7px;top:250.5px;font:normal normal 12px/14px 'Liberation Sans',sans-serif;color:#000;transform:scaleX(0.929);">ABANDONED</span>
<span class="t" style="left:275.6px;top:250.5px;font:normal normal 12px/14px 'Liberation Sans',sans-serif;color:#000;transform:scaleX(0.956);">Autogenerated_S</span>
<span class="t" style="left:375.9px;top:250.5px;font:normal normal 12px/14px 'Liberation Sans',sans-serif;color:#000;transform:scaleX(0.830);">TYPE</span>
<span class="t" style="left:475.6px;top:250.5px;font:normal normal 12px/14px 'Liberation Sans',sans-serif;color:#000;transform:scaleX(0.974);">Linetype</span>
<div style="left:68px;top:269px;width:472px;height:21px;background:#fff"></div>
<div style="left:27px;top:269px;width:40px;height:21px;background:linear-gradient(90deg,#fff 24%,#f4f4f6 30%,#eeeef2 92%,#f8f8f8)"></div>
<div style="left:27px;top:290px;width:40px;height:1px;background:#e2e2e2"></div>
<div style="left:68px;top:290px;width:472px;height:1px;background:#a6a6a6"></div>
<span class="t" style="left:71.5px;top:273.0px;font:normal normal 12px/14px 'Liberation Sans',sans-serif;color:#000;transform:scaleX(0.936);">Small</span>
<span class="t" style="left:171.7px;top:273.0px;font:normal normal 12px/14px 'Liberation Sans',sans-serif;color:#000;transform:scaleX(0.900);">NO</span>
<span class="t" style="left:270.8px;top:273.0px;font:normal normal 12px/14px 'Liberation Sans',sans-serif;color:#000;transform:scaleX(0.884);">4984</span>
<span class="t" style="left:371.6px;top:273.0px;font:normal normal 12px/14px 'Liberation Sans',sans-serif;color:#000;transform:scaleX(0.854);">COPPER</span>
<span class="t" style="left:471.3px;top:273.0px;font:normal normal 12px/14px 'Liberation Sans',sans-serif;color:#000;transform:scaleX(0.931);">ByLayer</span>
<div style="left:68px;top:291px;width:472px;height:21px;background:#f0f0f0"></div>
<div style="left:27px;top:291px;width:40px;height:21px;background:linear-gradient(90deg,#fff 24%,#f4f4f6 30%,#eeeef2 92%,#f8f8f8)"></div>
<div style="left:27px;top:312px;width:40px;height:1px;background:#e2e2e2"></div>
<div style="left:68px;top:312px;width:472px;height:1px;background:#a6a6a6"></div>
<span class="t" style="left:71.5px;top:295.0px;font:normal normal 12px/14px 'Liberation Sans',sans-serif;color:#000;transform:scaleX(0.936);">Small</span>
<span class="t" style="left:171.7px;top:295.0px;font:normal normal 12px/14px 'Liberation Sans',sans-serif;color:#000;transform:scaleX(0.900);">NO</span>
<span class="t" style="left:270.8px;top:295.0px;font:normal normal 12px/14px 'Liberation Sans',sans-serif;color:#000;transform:scaleX(0.884);">4983</span>
<span class="t" style="left:371.6px;top:295.0px;font:normal normal 12px/14px 'Liberation Sans',sans-serif;color:#000;transform:scaleX(0.854);">COPPER</span>
<span class="t" style="left:471.3px;top:295.0px;font:normal normal 12px/14px 'Liberation Sans',sans-serif;color:#000;transform:scaleX(0.931);">ByLayer</span>
<div style="left:68px;top:313px;width:472px;height:21px;background:#fff"></div>
<div style="left:27px;top:313px;width:40px;height:21px;background:linear-gradient(90deg,#fff 24%,#f4f4f6 30%,#eeeef2 92%,#f8f8f8)"></div>
<div style="left:27px;top:334px;width:40px;height:1px;background:#e2e2e2"></div>
<div style="left:68px;top:334px;width:472px;height:1px;background:#a6a6a6"></div>
<span class="t" style="left:71.5px;top:317.0px;font:normal normal 12px/14px 'Liberation Sans',sans-serif;color:#000;transform:scaleX(0.936);">Small</span>
<span class="t" style="left:171.7px;top:317.0px;font:normal normal 12px/14px 'Liberation Sans',sans-serif;color:#000;transform:scaleX(0.900);">NO</span>
<span class="t" style="left:270.8px;top:317.0px;font:normal normal 12px/14px 'Liberation Sans',sans-serif;color:#000;transform:scaleX(0.884);">1372</span>
<span class="t" style="left:371.6px;top:317.0px;font:normal normal 12px/14px 'Liberation Sans',sans-serif;color:#000;transform:scaleX(0.871);">ASBESTOS CEM...</span>
<span class="t" style="left:471.3px;top:317.0px;font:normal normal 12px/14px 'Liberation Sans',sans-serif;color:#000;transform:scaleX(0.931);">ByLayer</span>
<div style="left:68px;top:335px;width:472px;height:21px;background:#f0f0f0"></div>
<div style="left:27px;top:335px;width:40px;height:21px;background:linear-gradient(90deg,#fff 24%,#f4f4f6 30%,#eeeef2 92%,#f8f8f8)"></div>
<div style="left:27px;top:356px;width:40px;height:1px;background:#e2e2e2"></div>
<div style="left:68px;top:356px;width:472px;height:1px;background:#a6a6a6"></div>
<span class="t" style="left:71.5px;top:339.0px;font:normal normal 12px/14px 'Liberation Sans',sans-serif;color:#000;transform:scaleX(0.936);">Small</span>
<span class="t" style="left:171.7px;top:339.0px;font:normal normal 12px/14px 'Liberation Sans',sans-serif;color:#000;transform:scaleX(0.900);">NO</span>
<span class="t" style="left:270.8px;top:339.0px;font:normal normal 12px/14px 'Liberation Sans',sans-serif;color:#000;transform:scaleX(0.884);">1371</span>
<span class="t" style="left:371.6px;top:339.0px;font:normal normal 12px/14px 'Liberation Sans',sans-serif;color:#000;transform:scaleX(0.871);">ASBESTOS CEM...</span>
<span class="t" style="left:471.3px;top:339.0px;font:normal normal 12px/14px 'Liberation Sans',sans-serif;color:#000;transform:scaleX(0.931);">ByLayer</span>
<div style="left:68px;top:357px;width:472px;height:21px;background:#fff"></div>
<div style="left:27px;top:357px;width:40px;height:21px;background:linear-gradient(90deg,#fff 24%,#f4f4f6 30%,#eeeef2 92%,#f8f8f8)"></div>
<div style="left:27px;top:378px;width:40px;height:1px;background:#e2e2e2"></div>
<div style="left:68px;top:378px;width:472px;height:1px;background:#a6a6a6"></div>
<span class="t" style="left:71.5px;top:361.0px;font:normal normal 12px/14px 'Liberation Sans',sans-serif;color:#000;transform:scaleX(0.936);">Small</span>
<span class="t" style="left:171.7px;top:361.0px;font:normal normal 12px/14px 'Liberation Sans',sans-serif;color:#000;transform:scaleX(0.812);">YES</span>
<span class="t" style="left:270.8px;top:361.0px;font:normal normal 12px/14px 'Liberation Sans',sans-serif;color:#000;transform:scaleX(0.884);">1370</span>
<span class="t" style="left:371.6px;top:361.0px;font:normal normal 12px/14px 'Liberation Sans',sans-serif;color:#000;transform:scaleX(0.871);">ASBESTOS CEM...</span>
<span class="t" style="left:471.3px;top:361.0px;font:normal normal 12px/14px 'Liberation Sans',sans-serif;color:#000;transform:scaleX(0.931);">ByLayer</span>
<div style="left:68px;top:379px;width:472px;height:21px;background:#f0f0f0"></div>
<div style="left:27px;top:379px;width:40px;height:21px;background:linear-gradient(90deg,#fff 24%,#f4f4f6 30%,#eeeef2 92%,#f8f8f8)"></div>
<div style="left:27px;top:400px;width:40px;height:1px;background:#e2e2e2"></div>
<div style="left:68px;top:400px;width:472px;height:1px;background:#a6a6a6"></div>
<span class="t" style="left:71.5px;top:383.0px;font:normal normal 12px/14px 'Liberation Sans',sans-serif;color:#000;transform:scaleX(0.936);">Small</span>
<span class="t" style="left:171.7px;top:383.0px;font:normal normal 12px/14px 'Liberation Sans',sans-serif;color:#000;transform:scaleX(0.900);">NO</span>
<span class="t" style="left:270.8px;top:383.0px;font:normal normal 12px/14px 'Liberation Sans',sans-serif;color:#000;transform:scaleX(0.884);">1367</span>
<span class="t" style="left:371.6px;top:383.0px;font:normal normal 12px/14px 'Liberation Sans',sans-serif;color:#000;transform:scaleX(0.861);">C900</span>
<span class="t" style="left:471.3px;top:383.0px;font:normal normal 12px/14px 'Liberation Sans',sans-serif;color:#000;transform:scaleX(0.931);">ByLayer</span>
<div style="left:167px;top:269px;width:1px;height:132px;background:#9c9c9c"></div>
<div style="left:267px;top:269px;width:1px;height:132px;background:#9c9c9c"></div>
<div style="left:367px;top:269px;width:1px;height:132px;background:#9c9c9c"></div>
<div style="left:467px;top:269px;width:1px;height:132px;background:#9c9c9c"></div>
<div style="left:27px;top:247px;width:1px;height:154px;background:#5a5a5a"></div>
<div style="left:540px;top:247px;width:17px;height:154px;background:#f0f0f0"></div>
<div style="left:539px;top:247px;width:1px;height:154px;background:#e4e4e4"></div>
<div style="left:545px;top:253.500px;width:0;height:0;border:3.500px solid transparent;border-bottom:3.500px solid #4a4a4a;border-top:none"></div>
<div style="left:545.500px;top:391px;width:0;height:0;border:3.500px solid transparent;border-top:3.500px solid #4a4a4a;border-bottom:none"></div>
<div style="left:541px;top:264px;width:14px;height:15px;background:linear-gradient(90deg,#f6f6f6,#e6e6e6 50%,#c4c4c4);border:1px solid #979797;border-radius:2px"></div>
<div style="left:27px;top:401px;width:513px;height:17px;background:#efefef"></div>
<div style="left:540px;top:401px;width:17px;height:17px;background:#f4f4f4"></div>
<div style="left:33px;top:405.500px;width:0;height:0;border:3.500px solid transparent;border-right:4px solid #4a4a4a;border-left:none"></div>
<div style="left:529px;top:405.500px;width:0;height:0;border:3.500px solid transparent;border-left:4px solid #4a4a4a;border-right:none"></div>
<div style="left:45px;top:402px;width:319px;height:15px;background:linear-gradient(#f5f5f5,#e8e8e8 45%,#d2d2d2 55%,#c6c6c6);border:1px solid #979797;border-radius:2px"></div>
<div style="left:200px;top:406px;width:2px;height:7px;background:linear-gradient(#333,#777);border-right:1px solid #f4f4f4"></div><div style="left:203px;top:406px;width:2px;height:7px;background:linear-gradient(#333,#777);border-right:1px solid #f4f4f4"></div><div style="left:206px;top:406px;width:2px;height:7px;background:linear-gradient(#333,#777);border-right:1px solid #f4f4f4"></div>
<div style="left:27px;top:417px;width:530px;height:1px;background:#a8a8a8"></div><div style="left:27px;top:418px;width:530px;height:1px;background:#0a0a0a"></div>
<div style="left:27px;top:419px;width:530px;height:29px;background:linear-gradient(#fff,#fcfcfc 50%,#ededed)"></div>
<div style="left:58px;top:420px;width:58px;height:27px;background:#fff"></div>
<span class="t" style="left:30.3px;top:427.5px;font:normal normal 12px/14px 'Liberation Sans',sans-serif;color:#000;transform:scaleX(0.941);">Row</span>
<span class="t" style="left:120.8px;top:427.5px;font:normal normal 12px/14px 'Liberation Sans',sans-serif;color:#000;transform:scaleX(0.923);">of 220</span>
<div style="left:159px;top:428px;width:1px;height:15px;background:#bdbdbd"></div>
<span class="t" style="left:164.6px;top:427.5px;font:normal normal 12px/14px 'Liberation Sans',sans-serif;color:#000;transform:scaleX(0.933);">0 Selected</span>
<span class="t" style="left:235.0px;top:427.5px;font:normal normal 12px/14px 'Liberation Sans',sans-serif;color:#0000ff;transform:scaleX(0.944);text-decoration:underline;">Search to Select</span>
<div style="left:335px;top:428px;width:1px;height:15px;background:#bdbdbd"></div>
<span class="t" style="left:345.3px;top:427.5px;font:normal normal 12px/14px 'Liberation Sans',sans-serif;color:#000;transform:scaleX(1.006);">Options</span>
<div style="left:397px;top:434px;width:0;height:0;border:3px solid transparent;border-top:3px solid #111;border-bottom:none"></div>
</body></html>
